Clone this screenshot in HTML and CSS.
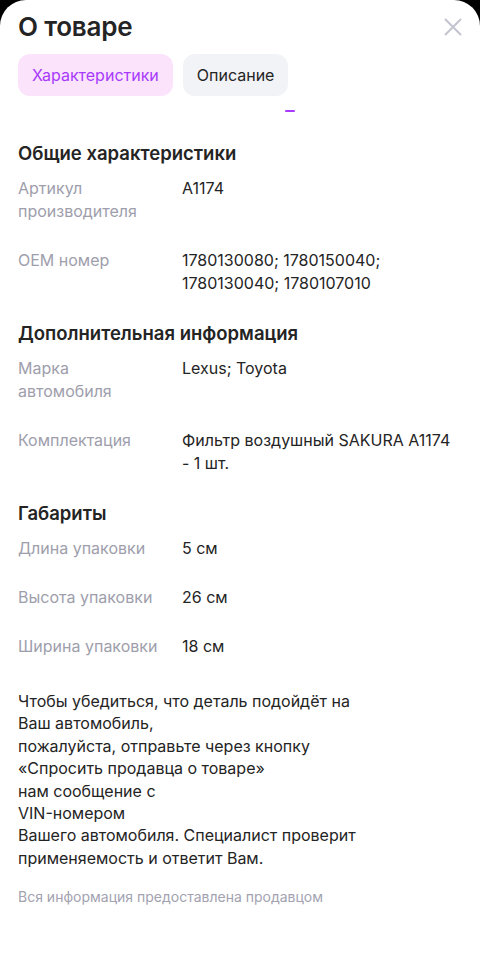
FILE: index.html
```html
<!DOCTYPE html>
<html lang="ru">
<head>
    <meta charset="UTF-8">
    <meta name="viewport" content="width=device-width, initial-scale=1.0">
    <title>О товаре</title>
    <link rel="stylesheet" href="styles.css">
</head>
<body>

    <div class="sheet">
        <div class="sheet-header">
            <h1>О товаре</h1>
            <button class="close-btn" type="button" aria-label="Закрыть">
                <svg width="18" height="18" viewBox="0 0 18 18">
                    <path d="M1.5 1.5L16.5 16.5M16.5 1.5L1.5 16.5" stroke="#c4c4d0" stroke-width="2" stroke-linecap="round"/>
                </svg>
            </button>
        </div>

        <div class="tabs">
            <button type="button" class="tab active">Характеристики</button>
            <button type="button" class="tab">Описание</button>
        </div>

        <div class="scroll-edge"><span class="edge-mark"></span></div>

        <div class="content">
            <div class="section">
                <h2>Общие характеристики</h2>
                <div class="rows">
                    <div class="label">Артикул производителя</div>
                    <div class="value">A1174</div>
                    <div class="label">OEM номер</div>
                    <div class="value">1780130080; 1780150040; 1780130040; 1780107010</div>
                </div>
            </div>

            <div class="section">
                <h2>Дополнительная информация</h2>
                <div class="rows">
                    <div class="label">Марка автомобиля</div>
                    <div class="value">Lexus; Toyota</div>
                    <div class="label">Комплектация</div>
                    <div class="value">Фильтр воздушный SAKURA A1174 - 1&nbsp;шт.</div>
                </div>
            </div>

            <div class="section">
                <h2>Габариты</h2>
                <div class="rows">
                    <div class="label">Длина упаковки</div>
                    <div class="value">5 см</div>
                    <div class="label">Высота упаковки</div>
                    <div class="value">26 см</div>
                    <div class="label">Ширина упаковки</div>
                    <div class="value">18 см</div>
                </div>
            </div>

            <p class="note">Чтобы убедиться, что деталь подойдёт на<br>Ваш автомобиль,<br>пожалуйста, отправьте через кнопку<br>«Спросить продавца о товаре»<br>нам сообщение с<br>VIN-номером<br>Вашего автомобиля. Специалист проверит<br>применяемость и ответит Вам.</p>

            <p class="source">Вся информация предоставлена продавцом</p>
        </div>
    </div>

</body>
</html>
```

FILE: styles.css
```css
* {
    box-sizing: border-box;
}
body {
    margin: 0;
    background-color: #000;
    font-family: Inter, "Noto Sans", sans-serif;
    color: #242424;
}
.sheet {
    min-height: 959px;
    background-color: #fff;
    border-radius: 26px 26px 0 0;
    padding: 11px 18px 0;
}
.sheet-header {
    display: flex;
    justify-content: space-between;
    align-items: center;
}
h1 {
    margin: 0;
    font-size: 26px;
    line-height: 32px;
    font-weight: 600;
    letter-spacing: -0.2px;
}
.close-btn {
    border: none;
    background: none;
    padding: 0;
    width: 18px;
    height: 18px;
    display: flex;
}
.tabs {
    display: flex;
    gap: 10px;
    margin-top: 11px;
}
.tab {
    border: none;
    height: 42px;
    padding: 0 14px;
    border-radius: 12px;
    font-family: inherit;
    font-size: 16px;
    background-color: #f2f3f7;
    color: #242424;
}
.tab.active {
    background-color: #fbe4fb;
    color: #a73afd;
}
.scroll-edge {
    height: 45px;
    padding-top: 14px;
}
.edge-mark {
    display: block;
    width: 10px;
    height: 2px;
    margin-left: 267px;
    background-color: #a73afd;
    border-radius: 1px;
}
h2 {
    margin: 0 0 12px;
    font-size: 18.5px;
    line-height: 24px;
    font-weight: 600;
}
.section {
    margin-bottom: 26px;
}
.rows {
    display: grid;
    grid-template-columns: 164px 1fr;
    row-gap: 26px;
    font-size: 16px;
    line-height: 23px;
}
.label {
    color: #9e9eac;
    padding-right: 20px;
}
.value {
    color: #242424;
}
.note {
    margin: 32px 0 0;
    font-size: 16px;
    line-height: 22.4px;
}
.source {
    margin: 19px 0 0;
    font-size: 14px;
    line-height: 18px;
    color: #a2a2b0;
}
```
